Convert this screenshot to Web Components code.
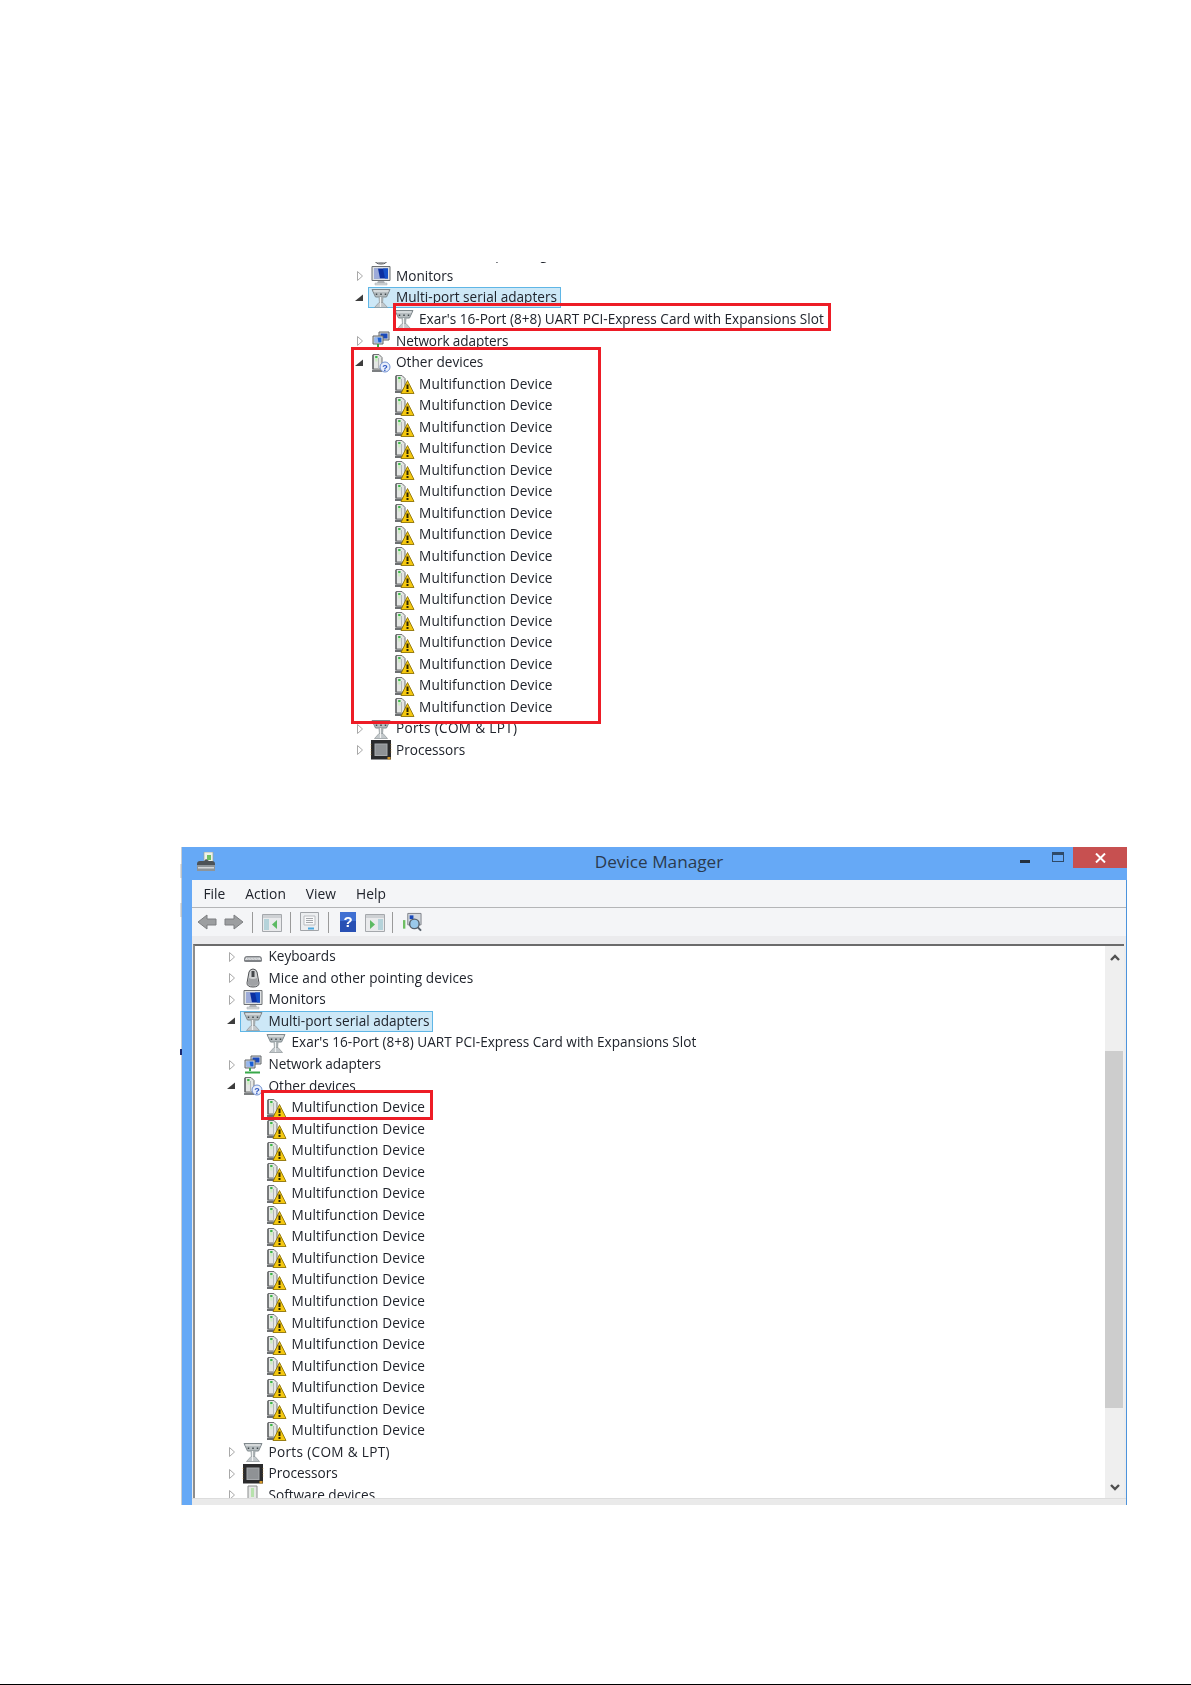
<!DOCTYPE html>
<html lang="en">
<head>
<meta charset="utf-8">
<title>Device Manager</title>
<style>
  html, body { margin: 0; background: #fff; }
</style>
</head>
<body>
<doc-page></doc-page>

<script>
// tower shape shared by the "other" and "warn" device pictures
const TOWER = `<path d="M2 1.500h6l3 3V16H2z" fill="#e4e6e4" stroke="#6f7173"/><path d="M2 2v14" stroke="#55585a" stroke-width="1.200"/><path d="M4.200 3.500h2.300v5H4.200z" fill="#cdeec2"/><path d="M4.200 3h2.300v2H4.200z" fill="#3cb54a"/><path d="M7.500 5v11" stroke="#b4b7b8"/>`;

// all the little device pictures, drawn on a 20x20 box
const ICONS = {
    keyboard: `<path d="M1 12.500q0-3.500 3-3.500h12q3 0 3 3.500v1q0 1.500-2 1.500H3q-2 0-2-1.500z" fill="#7f8286"/><path d="M3 10.500h14l1 2.500H2z" fill="#e4e6e8"/><path d="M4 11.500h12M3.500 12.500h13" stroke="#a9acb0" stroke-width=".6" stroke-dasharray="1 .5"/>`,
    mouse: `<path d="M6 4q1-3 4-3t4 3l2 11q0 4-6 4t-6-4z" fill="#d0d2d3" stroke="#4f5154"/><path d="M8.500 3h3v6h-3z" fill="#44474a"/><path d="M6 10q4 2 8 0l1.500 5q-.5 3-5.500 3t-5.500-3z" fill="#a0a2a5"/>`,
    monitor: `<path d="M1 .5h18v14H1z" fill="#dfe2e4" stroke="#6d7073"/><path d="M3 2.500h14v10H3z" fill="#0a2fa0"/><path d="M3 2.500h4l2 10H3z" fill="#ffffff" opacity=".6"/><path d="M12 2.500h5v10h-3z" fill="#1450c8"/><path d="M7 15h6l1 2H6z" fill="#b0b3b7"/><path d="M4 17h12v2H4z" fill="#d4d7d9" stroke="#a7aaad" stroke-width=".5"/>`,
    port: `<path d="M1 1.500h18l-3.500 7.500h-11z" fill="#b6bdc0" stroke="#7f888c"/><path d="M2.500 3h15" stroke="#e9ecec" stroke-width="1.200"/><path d="M5.500 5.500v1.500M10 5.500v1.500M14.500 5.500v1.500" stroke="#3f474a" stroke-width="1.500"/><path d="M7.500 9h5l-.5 6h-4z" fill="#a5acaf"/><path d="M8 14.500L3.500 19.500h13L12 14.500z" fill="#c2c8cb" stroke="#8f979a" stroke-width=".7"/><path d="M9.500 9v10" stroke="#f0f2f2" stroke-width="1.200"/>`,
    network: `<path d="M8 1h10v8H8z" fill="#d8dbdd" stroke="#62666a"/><path d="M9.500 2.500h7v5h-7z" fill="#1a49bb"/><path d="M2 5h10v8H2z" fill="#d8dbdd" stroke="#62666a"/><path d="M3.500 6.500h7v5h-7z" fill="#1a5fd4"/><path d="M3.500 6.500h3l1 5h-4z" fill="#fff" opacity=".55"/><path d="M7 13v3M2 17.500h15" stroke="#39a84a" stroke-width="2"/>`,
    other: `${TOWER}<path d="M1 16.500h10v2.500H1z" fill="#7c7f81"/><circle cx="14" cy="14" r="5" fill="#e8eefb" stroke="#6f8fd0"/><text x="14" y="17.500" font-family="Liberation Sans, sans-serif" font-size="9" font-weight="700" text-anchor="middle" fill="#2c56c2">?</text>`,
    warn: `${TOWER}<path d="M1 16.500h7.500v2.500H1z" fill="#6c6f71"/><path d="M13.500 6.500L20 19.500H7z" fill="#f5c80f" stroke="#8f7408" stroke-width=".9" stroke-linejoin="round"/><path d="M13.500 10.500v4.500M13.500 16v2" stroke="#2a2300" stroke-width="2"/>`,
    cpu: `<path d="M0 0h20v19.500H0z" fill="#2b2b2c"/><path d="M3.500 3.500h13v12.500h-13z" fill="#a7aaad"/><path d="M4.500 4.500h11v10.500h-11z" fill="#8f9295"/><path d="M16.500 17h3v2.500h-3z" fill="#d69a2d"/><path d="M0 4v12M20 4v10" stroke="#d69a2d" stroke-width=".5" stroke-dasharray="1 1.500"/>`,
    software: `<path d="M5 1h9v16H5z" fill="#e6e8e6" stroke="#8a8c8d"/><path d="M8 3h3v9H8z" fill="#b7e2ac"/><path d="M3 17h13v2H3z" fill="#9b9d9f"/>`
};

class DevIcon extends HTMLElement {
    constructor() {
        super();
        this.attachShadow({ mode: 'open' });
        const type = this.getAttribute('type');
        this.shadowRoot.innerHTML = `
            <style>
                :host { display: block; width: 20px; height: 20px; flex: none; }
                svg { display: block; overflow: visible; }
            </style>
            <svg width="20" height="20" viewBox="0 0 20 20">${ICONS[type] || ''}</svg>
        `;
    }
}

class TreeRow extends HTMLElement {
    constructor() {
        super();
        this.attachShadow({ mode: 'open' });
        const state = this.getAttribute('state');
        let arrow = '';
        if (state === 'closed') arrow = '<path d="M5.500 1.500l5 4.500-5 4.500z" fill="#fff" stroke="#a8a8a8"/>';
        if (state === 'open') arrow = '<path d="M11 2.500v6.500H3z" fill="#3d3d3d"/>';

        this.shadowRoot.innerHTML = `
            <style>
                :host {
                    display: flex;
                    align-items: center;
                    height: 21.55px;
                    box-sizing: border-box;
                    white-space: nowrap;
                }
                :host([child]) { padding-left: 23px; }
                .arrow { width: 17px; height: 12px; flex: none; display: block; }
                .cell {
                    display: flex;
                    align-items: center;
                    gap: var(--label-gap, 5px);
                    height: 21px;
                    box-sizing: border-box;
                    padding: 0 3px 0 2px;
                    border: 1px solid transparent;
                    margin-left: -1px;
                }
                .label { margin-bottom: 2px; }
                :host([selected]) .cell { background: #cde8f7; border-color: #5fb6e6; }
            </style>
            <svg class="arrow" viewBox="0 0 17 12">${arrow}</svg>
            <div class="cell">
                <dev-icon type="${this.getAttribute('icon')}"></dev-icon>
                <span class="label"><slot></slot></span>
            </div>
        `;
    }
}

class RedBox extends HTMLElement {
    constructor() {
        super();
        this.attachShadow({ mode: 'open' });
        this.shadowRoot.innerHTML = `
            <style>
                :host {
                    position: absolute;
                    box-sizing: border-box;
                    border: 3px solid #ed1c26;
                    pointer-events: none;
                }
            </style>
        `;
    }
}

function deviceRows() {
    let rows = '';
    for (let i = 0; i < 16; i++) {
        rows += `<tree-row child icon="warn" style="letter-spacing:.17px">Multifunction Device</tree-row>`;
    }
    return rows;
}

const FONT = `"Open Sans", "Noto Sans", sans-serif`;

class CropFigure extends HTMLElement {
    constructor() {
        super();
        this.attachShadow({ mode: 'open' });
        this.shadowRoot.innerHTML = `
            <style>
                :host {
                    display: block;
                    position: relative;
                    width: 500px;
                    height: 498px;
                    margin-left: 352px;
                    font: 13.600px ${FONT};
                    color: #20242c;
                }
                .clip { height: 100%; overflow: hidden; }
                .tree { margin-top: -17.950px; filter: blur(.35px); }
                .a { left: 41px; top: 41px; width: 438px; height: 28px; }
                .b { left: -1px; top: 85px; width: 250px; height: 377px; }
            </style>
            <div class="clip">
                <div class="tree">
                    <tree-row state="closed" icon="mouse">Mice and other pointing devices</tree-row>
                    <tree-row state="closed" icon="monitor">Monitors</tree-row>
                    <tree-row state="open" icon="port" selected>Multi-port serial adapters</tree-row>
                    <tree-row child icon="port">Exar's 16-Port (8+8) UART PCI-Express Card with Expansions Slot</tree-row>
                    <tree-row state="closed" icon="network" style="letter-spacing:-.1px">Network adapters</tree-row>
                    <tree-row state="open" icon="other">Other devices</tree-row>
                    ${deviceRows()}
                    <tree-row state="closed" icon="port" style="letter-spacing:.32px">Ports (COM &amp; LPT)</tree-row>
                    <tree-row state="closed" icon="cpu">Processors</tree-row>
                </div>
            </div>
            <red-box class="a"></red-box>
            <red-box class="b"></red-box>
        `;
    }
}

class TitleBar extends HTMLElement {
    constructor() {
        super();
        this.attachShadow({ mode: 'open' });
        this.shadowRoot.innerHTML = `
            <style>
                :host {
                    display: grid;
                    grid-template-columns: 1fr auto 1fr;
                    height: 33px;
                    flex: none;
                    color: #2b3a4e;
                }
                .app { padding: 5px 0 0 14px; }
                .title { font-size: 17.200px; line-height: 30px; padding-left: 9px; }
                .controls { justify-self: end; display: flex; align-items: flex-start; }
                .min { width: 10px; height: 3px; background: #23303f; margin: 13px 22px 0 0; }
                .max { width: 12px; height: 10px; box-sizing: border-box; border: 1.500px solid #2f4a68; border-top-width: 3px; margin: 5px 9px 0 0; }
                .close { width: 54px; height: 21px; background: #c75050; display: flex; align-items: center; justify-content: center; }
            </style>
            <div class="app">
                <svg width="20" height="20" viewBox="0 0 20 20" style="display:block;filter:blur(.3px)">
                    <path d="M8 0h9v10H8z" fill="#eef2e9" stroke="#9aa59a" stroke-width=".7"/>
                    <path d="M11 3h4v5h-4z" fill="#6fbf63"/>
                    <path d="M1 12q0-3 3-3h4l2-2 3 2h3q3 0 3 3v3H1z" fill="#4c5257"/>
                    <path d="M1 13h18v6H1z" fill="#8d9499"/>
                    <path d="M2 15h16v1.500H2z" fill="#d2d6d9"/>
                </svg>
            </div>
            <div class="title">Device Manager</div>
            <div class="controls">
                <div class="min"></div>
                <div class="max"></div>
                <div class="close">
                    <svg width="11" height="10" viewBox="0 0 11 10"><path d="M1 .500l9 9M10 .500l-9 9" stroke="#fff" stroke-width="2"/></svg>
                </div>
            </div>
        `;
    }
}

class MenuBar extends HTMLElement {
    constructor() {
        super();
        this.attachShadow({ mode: 'open' });
        this.shadowRoot.innerHTML = `
            <style>
                :host {
                    display: flex;
                    align-items: center;
                    flex: none;
                    height: 28px;
                    box-sizing: border-box;
                    border-bottom: 1px solid #b4b5b7;
                    background: #f4f5f7;
                    padding-left: 12px;
                    gap: 20px;
                    font-size: 13.800px;
                    color: #20242c;
                    filter: blur(.3px);
                }
            </style>
            <span>File</span><span>Action</span><span>View</span><span>Help</span>
        `;
    }
}

class ToolBar extends HTMLElement {
    constructor() {
        super();
        this.attachShadow({ mode: 'open' });
        const pane = (extra) => `
            <svg width="20" height="20" viewBox="0 0 20 20">
                <path d="M.5 2.500h19v17H.5z" fill="#e9eaec" stroke="#a5a8ac"/>
                <path d="M1 3h18v3H1z" fill="#ced1d4"/>
                ${extra}
            </svg>`;
        this.shadowRoot.innerHTML = `
            <style>
                :host {
                    display: flex;
                    align-items: center;
                    flex: none;
                    height: 36px;
                    box-sizing: border-box;
                    background: #f4f5f7;
                    padding-left: 5px;
                    border-bottom: 8px solid #ebebed;
                    filter: blur(.3px);
                }
                svg { display: block; flex: none; }
                .sep { width: 1px; height: 21px; background: #9a9a9a; flex: none; margin: 0 9px 0 7px; }
            </style>
            <svg width="20" height="18" viewBox="0 0 20 18" style="margin-right:7px"><path d="M10 2L1 9l9 7v-4h9V6h-9z" fill="#9c9ea0" stroke="#7d7f81"/></svg>
            <svg width="20" height="18" viewBox="0 0 20 18"><path d="M10 2l9 7-9 7v-4H1V6h9z" fill="#9c9ea0" stroke="#7d7f81"/></svg>
            <div class="sep" style="margin-left:8px;margin-right:9px"></div>
            ${pane('<path d="M2 7h5v11H2z" fill="#b5d3da"/><path d="M15 8l-5 4.500 5 4.500z" fill="#5cba63"/>')}
            <div class="sep" style="margin-left:8px"></div>
            <svg width="19" height="20" viewBox="0 0 19 20"><path d="M.5 .5h18v18H.5z" fill="#eceef0" stroke="#a1a4a8"/><path d="M4 4h11v9H4z" fill="#f8f9fa" stroke="#b9bcc0"/><path d="M6 6.500h7M6 8.500h7M6 10.500h7" stroke="#a4a7ab"/><path d="M8 16.500h6" stroke="#4aa8e0" stroke-width="2"/></svg>
            <div class="sep" style="margin-left:9px;margin-right:11px"></div>
            <svg width="16" height="20" viewBox="0 0 16 20"><path d="M0 0h16v20H0z" fill="#2850b4"/><path d="M0 0h16v9H0z" fill="#3f6fd2"/><text x="8" y="15" font-family="Liberation Sans, sans-serif" font-size="15" font-weight="700" text-anchor="middle" fill="#fff">?</text></svg>
            <div style="width:9px;flex:none"></div>
            ${pane('<path d="M13 7h5v11h-5z" fill="#b5d3da"/><path d="M5 8l5 4.500-5 4.500z" fill="#5cba63"/>')}
            <div class="sep" style="margin-left:7px;margin-right:10px"></div>
            <svg width="19" height="20" viewBox="0 0 20 20"><path d="M5 1h14v12H5z" fill="#d3d8de" stroke="#7d8287"/><path d="M7 3h4v4H7z" fill="#1a49bb"/><path d="M1 8v9" stroke="#6fbf63" stroke-width="3"/><circle cx="12" cy="12" r="5" fill="#9ac9ea" stroke="#55606a" stroke-width="1.500"/><path d="M15.500 15.500L19 19" stroke="#55606a" stroke-width="2"/></svg>
        `;
    }
}

class ScrollBar extends HTMLElement {
    constructor() {
        super();
        this.attachShadow({ mode: 'open' });
        this.shadowRoot.innerHTML = `
            <style>
                :host {
                    display: flex;
                    flex-direction: column;
                    justify-content: space-between;
                    align-items: center;
                    position: relative;
                    flex: none;
                    width: 19px;
                    box-sizing: border-box;
                    padding: 8px 0 7px;
                    background: #efefef;
                }
                .thumb { position: absolute; left: 0; top: 105px; width: 18px; height: 357px; background: #cdcdcd; }
                svg { display: block; }
            </style>
            <svg width="10" height="7" viewBox="0 0 10 7"><path d="M1 6l4-4 4 4" fill="none" stroke="#505050" stroke-width="2.400"/></svg>
            <div class="thumb"></div>
            <svg width="10" height="7" viewBox="0 0 10 7"><path d="M1 1l4 4 4-4" fill="none" stroke="#505050" stroke-width="2.400"/></svg>
        `;
    }
}

class DeviceWindow extends HTMLElement {
    constructor() {
        super();
        this.attachShadow({ mode: 'open' });
        this.shadowRoot.innerHTML = `
            <style>
                :host {
                    display: flex;
                    flex-direction: column;
                    position: relative;
                    box-sizing: border-box;
                    width: 946px;
                    height: 658px;
                    margin-left: 181px;
                    flex: none;
                    background: #66a9f6;
                    border-left: 1.500px solid #c9ced3;
                    font-family: ${FONT};
                }
                .client {
                    flex: 1;
                    min-height: 0;
                    display: flex;
                    flex-direction: column;
                    margin-left: 9.500px;
                    border-right: 1px solid #4c93dc;
                    background: #ececec;
                }
                .body {
                    flex: 1;
                    min-height: 0;
                    display: flex;
                    margin-right: 2px;
                    border-top: 2px solid #6b6b6b;
                    border-left: 2px solid #8d8d8d;
                    margin-left: 1px;
                    background: #fff;
                }
                .tree {
                    --label-gap: 6px;
                    flex: 1;
                    min-width: 0;
                    overflow: hidden;
                    padding-left: 29px;
                    font-size: 13.600px;
                    color: #20242c;
                    filter: blur(.35px);
                }
                .status { height: 6px; flex: none; border-top: 1px solid #dcdcdc; background: #eaeaea; }
                .c { left: 79px; top: 243px; width: 172px; height: 30px; }
                .specks { position: absolute; left: -4px; top: 12px; }
            </style>
            <svg class="specks" width="4" height="205" viewBox="0 0 4 205">
                <path d="M3 5v14M3 44v14" stroke="#a4a9ae" stroke-width="1.200" opacity=".6"/>
                <path d="M3 190v6" stroke="#1b2a70" stroke-width="2"/>
            </svg>
            <title-bar></title-bar>
            <div class="client">
                <menu-bar></menu-bar>
                <tool-bar></tool-bar>
                <div class="body">
                    <div class="tree">
                        <tree-row state="closed" icon="keyboard">Keyboards</tree-row>
                        <tree-row state="closed" icon="mouse" style="letter-spacing:.1px">Mice and other pointing devices</tree-row>
                        <tree-row state="closed" icon="monitor">Monitors</tree-row>
                        <tree-row state="open" icon="port" selected>Multi-port serial adapters</tree-row>
                        <tree-row child icon="port">Exar's 16-Port (8+8) UART PCI-Express Card with Expansions Slot</tree-row>
                        <tree-row state="closed" icon="network" style="letter-spacing:-.1px">Network adapters</tree-row>
                        <tree-row state="open" icon="other">Other devices</tree-row>
                        ${deviceRows()}
                        <tree-row state="closed" icon="port" style="letter-spacing:.32px">Ports (COM &amp; LPT)</tree-row>
                        <tree-row state="closed" icon="cpu">Processors</tree-row>
                        <tree-row state="closed" icon="software">Software devices</tree-row>
                    </div>
                    <scroll-bar></scroll-bar>
                </div>
                <div class="status"></div>
            </div>
            <red-box class="c"></red-box>
        `;
    }
}

class DocPage extends HTMLElement {
    constructor() {
        super();
        this.attachShadow({ mode: 'open' });
        this.shadowRoot.innerHTML = `
            <style>
                :host {
                    display: flex;
                    flex-direction: column;
                    gap: 87px;
                    box-sizing: border-box;
                    height: 1685px;
                    padding-top: 262px;
                    background: #fff;
                    border-bottom: 1px solid #000;
                }
            </style>
            <crop-figure></crop-figure>
            <device-window></device-window>
        `;
    }
}

// children first, so upgrades run in order
customElements.define('dev-icon', DevIcon);
customElements.define('tree-row', TreeRow);
customElements.define('red-box', RedBox);
customElements.define('title-bar', TitleBar);
customElements.define('menu-bar', MenuBar);
customElements.define('tool-bar', ToolBar);
customElements.define('scroll-bar', ScrollBar);
customElements.define('crop-figure', CropFigure);
customElements.define('device-window', DeviceWindow);
customElements.define('doc-page', DocPage);
</script>
</body>
</html>
